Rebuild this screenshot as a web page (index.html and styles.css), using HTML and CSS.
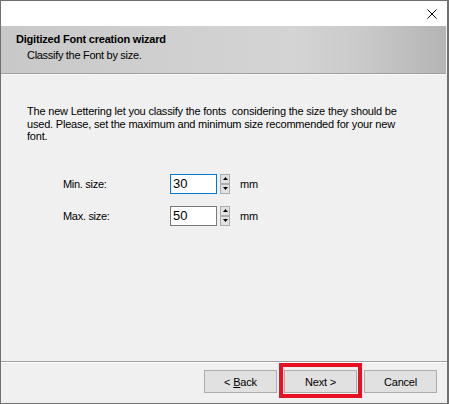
FILE: index.html
```html
<!DOCTYPE html>
<html>
<head>
<meta charset="utf-8">
<link rel="stylesheet" href="styles.css">
</head>
<body>
<div class="window">
  <div class="titlebar">
    <svg class="close" width="10" height="10" viewBox="0 0 10 10"><path d="M0.5 0.5 L9.5 9.5 M9.5 0.5 L0.5 9.5" stroke="#000" stroke-width="1" fill="none"/></svg>
  </div>
  <div class="header">
    <div class="h-title">Digitized Font creation wizard</div>
    <div class="h-sub">Classify the Font by size.</div>
  </div>
  <div class="content">
    <p class="intro">The new Lettering let you classify the fonts&nbsp; considering the size they should be used. Please, set the maximum and minimum size recommended for your new font.</p>
    <div class="fields">
      <div class="label">Min. size:</div>
      <div class="input focused">30</div>
      <div class="spin">
        <div class="spin-btn"><svg width="5" height="3" viewBox="0 0 5 3"><path d="M2.5 0 L5 3 L0 3 Z" fill="#000"/></svg></div>
        <div class="spin-btn"><svg width="5" height="3" viewBox="0 0 5 3"><path d="M0 0 L5 0 L2.5 3 Z" fill="#000"/></svg></div>
      </div>
      <div class="unit">mm</div>
      <div class="label">Max. size:</div>
      <div class="input">50</div>
      <div class="spin">
        <div class="spin-btn"><svg width="5" height="3" viewBox="0 0 5 3"><path d="M2.5 0 L5 3 L0 3 Z" fill="#000"/></svg></div>
        <div class="spin-btn"><svg width="5" height="3" viewBox="0 0 5 3"><path d="M0 0 L5 0 L2.5 3 Z" fill="#000"/></svg></div>
      </div>
      <div class="unit">mm</div>
    </div>
  </div>
  <div class="footer">
    <div class="btn"><span>&lt; <u>B</u>ack</span></div>
    <div class="highlight"><div class="btn"><span>Next &gt;</span></div></div>
    <div class="btn"><span>Cancel</span></div>
  </div>
</div>
</body>
</html>
```
FILE: styles.css
```css
html, body {
  margin: 0;
  padding: 0;
}
body {
  font-family: "Liberation Sans", Arial, sans-serif;
  font-size: 11px;
  color: #000;
  background: #f0f0f0;
}
.window {
  width: 449px;
  height: 404px;
  box-sizing: border-box;
  border: 1px solid #707070;
  border-right-width: 2px;
  background: #f0f0f0;
  display: flex;
  flex-direction: column;
}
.titlebar {
  height: 25px;
  background: #fff;
  display: flex;
  justify-content: flex-end;
  align-items: flex-start;
}
.close {
  margin-top: 8px;
  margin-right: 10px;
}
.header {
  height: 47px;
  background: linear-gradient(to right, #c8c8c8 0%, #d0d0d0 40%, #d4d4d4 66%, #c9c9c9 82%, #b4b4b4 100%);
  border-bottom: 1px solid #a0a0a0;
  box-sizing: content-box;
  margin-right: 1px;
}
.h-title {
  font-weight: bold;
  padding-left: 15px;
  padding-top: 6px;
  height: 14px;
  line-height: 14px;
  letter-spacing: -0.2px;
}
.h-sub {
  padding-left: 26px;
  padding-top: 2px;
  line-height: 14px;
  letter-spacing: -0.3px;
}
.content {
  flex: 1;
  border-top: 1px solid #f8f8f8;
  border-bottom: 1px solid #a0a0a0;
  padding: 0 26px;
}
.intro {
  margin: 30px 0 0 0;
  line-height: 12.5px;
  letter-spacing: -0.2px;
  width: 376px;
}
.fields {
  margin-top: 31px;
  margin-left: 36px;
  display: grid;
  grid-template-columns: 107px 47px 10px auto;
  column-gap: 0;
  row-gap: 12px;
  align-items: center;
}
.label {
  letter-spacing: -0.3px;
}
.input {
  height: 20px;
  box-sizing: border-box;
  border: 1px solid #7a7a7a;
  background: #fff;
  font-size: 13px;
  line-height: 18px;
  padding-left: 2px;
}
.input.focused {
  border-color: #0078d7;
}
.spin {
  margin-left: 3px;
  height: 20px;
  width: 10px;
  display: flex;
  flex-direction: column;
}
.spin-btn {
  flex: 1;
  box-sizing: border-box;
  border: 1px solid #adadad;
  background: #e1e1e1;
  display: flex;
  align-items: center;
  justify-content: center;
}
.unit {
  margin-left: 13px;
  letter-spacing: -0.2px;
}
.footer {
  border-top: 1px solid #fff;
  height: 41px;
  flex: none;
  display: flex;
  justify-content: flex-end;
  align-items: flex-start;
  padding-right: 10px;
  padding-top: 7px;
  box-sizing: border-box;
  gap: 7px;
}
.highlight {
  border: 4px solid #e81123;
  padding: 3px 1px 1px 1px;
  margin: -7px -5px -5px -5px;
}
.btn {
  width: 73px;
  height: 23px;
  box-sizing: border-box;
  border: 1px solid #adadad;
  background: #e1e1e1;
  display: flex;
  align-items: center;
  justify-content: center;
  letter-spacing: -0.2px;
}
```
